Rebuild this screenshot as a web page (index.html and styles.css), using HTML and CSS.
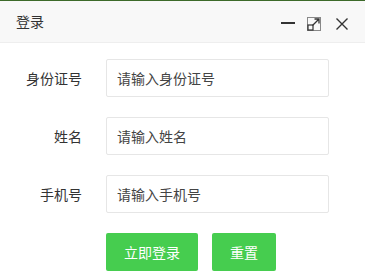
FILE: index.html
```html
<!DOCTYPE html>
<html lang="zh-CN">
<head>
    <meta charset="UTF-8">
    <meta name="viewport" content="width=device-width, initial-scale=1.0">
    <title>登录</title>
    <link rel="stylesheet" href="styles.css">
</head>
<body>
    <div class="layer">
        <div class="layer-title">
            <span>登录</span>
            <div class="layer-tools">
                <span class="tool-min"></span>
                <svg class="tool-max" width="14" height="14" viewBox="0 0 14 14">
                    <rect x="0.5" y="0.5" width="13" height="13" fill="none" stroke="#888" stroke-width="1"/>
                    <rect x="1" y="8" width="5" height="5" fill="none" stroke="#333" stroke-width="1.2"/>
                    <path d="M5.5 8.5L12 2M7.5 2H12V6.5" fill="none" stroke="#333" stroke-width="1.3"/>
                </svg>
                <svg class="tool-close" width="12" height="12" viewBox="0 0 12 12">
                    <path d="M0.5 0.5L11.5 11.5M11.5 0.5L0.5 11.5" stroke="#333" stroke-width="1.4"/>
                </svg>
            </div>
        </div>
        <form class="layer-content" id="loginForm">
            <div class="form-item">
                <label for="idCard">身份证号</label>
                <input type="text" id="idCard" name="idCard" placeholder="请输入身份证号">
            </div>
            <div class="form-item">
                <label for="name">姓名</label>
                <input type="text" id="name" name="name" placeholder="请输入姓名">
            </div>
            <div class="form-item">
                <label for="phone">手机号</label>
                <input type="text" id="phone" name="phone" placeholder="请输入手机号">
            </div>
            <div class="form-buttons">
                <button type="submit" class="btn">立即登录</button>
                <button type="reset" class="btn">重置</button>
            </div>
        </form>
    </div>
</body>
</html>
```

FILE: styles.css
```css
body {
    margin: 0;
    font-family: "Noto Sans CJK SC", "Liberation Sans", sans-serif;
    font-size: 14px;
    color: #333;
    background: #fff;
}
.layer {
    border-top: 1px solid #3d6a2a;
    width: 365px;
    height: 279px;
    overflow: hidden;
}
.layer-title {
    height: 41px;
    line-height: 41px;
    padding: 0 0 0 16px;
    background-color: #f8f8f8;
    border-bottom: 1px solid #eee;
    display: flex;
    justify-content: space-between;
    align-items: center;
}
.layer-tools {
    display: flex;
    align-items: center;
    padding-right: 17px;
}
.tool-min {
    display: block;
    width: 14px;
    height: 2px;
    background: #333;
    margin-top: 3px;
}
.tool-max {
    display: block;
    margin-left: 12px;
    margin-top: 4px;
}
.tool-close {
    display: block;
    margin-left: 15px;
    margin-top: 5px;
}
.layer-content {
    padding-top: 16px;
}
.form-item {
    display: flex;
    align-items: center;
    margin-bottom: 20px;
}
.form-item label {
    width: 82px;
    text-align: right;
    margin-right: 24px;
    color: #333;
}
.form-item input {
    width: 223px;
    height: 38px;
    padding: 0 10px;
    border: 1px solid #e6e6e6;
    border-radius: 2px;
    box-sizing: border-box;
    font-family: inherit;
    font-size: 14px;
    outline: none;
}
.form-item input::placeholder {
    color: #444;
}
.form-buttons {
    display: flex;
    gap: 14px;
    padding-left: 106px;
}
.btn {
    height: 38px;
    padding: 0 18px;
    background-color: #46cd4f;
    color: #fff;
    border: none;
    border-radius: 2px;
    font-family: inherit;
    font-size: 14px;
    cursor: pointer;
}
```
